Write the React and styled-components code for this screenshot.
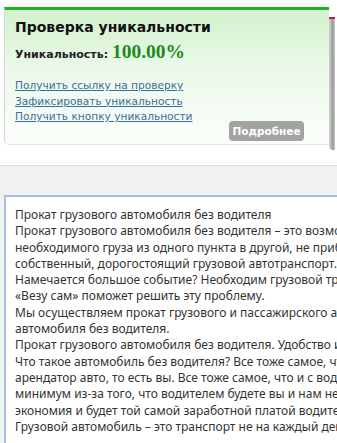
import React from 'react'
import styled, { createGlobalStyle } from 'styled-components'

const GlobalStyle = createGlobalStyle`
  html, body {
    margin: 0;
    padding: 0;
    background: #fff;
    overflow: hidden;
  }
  body {
    font-family: "DejaVu Sans", Verdana, sans-serif;
  }
`

const links = [
  'Получить ссылку на проверку',
  'Зафиксировать уникальность',
  'Получить кнопку уникальности',
]

const text = [
  'Прокат грузового автомобиля без водителя',
  'Прокат грузового автомобиля без водителя – это возможность перевезти',
  'необходимого груза из одного пункта в другой, не прибегая к услугам',
  'собственный, дорогостоящий грузовой автотранспорт. Э',
  'Намечается большое событие? Необходим грузовой транспорт?',
  '«Везу сам» поможет решить эту проблему.',
  'Мы осуществляем прокат грузового и пассажирского автотранспорта',
  'автомобиля без водителя.',
  'Прокат грузового автомобиля без водителя. Удобство и выгода',
  'Что такое автомобиль без водителя? Все тоже самое, что и',
  'арендатор авто, то есть вы. Все тоже самое, что и с водителем',
  'минимум из-за того, что водителем будете вы и нам не нужно',
  'экономия и будет той самой заработной платой водителя',
  'Грузовой автомобиль – это транспорт не на каждый день',
]

export default function App() {
  return (
    <Page>
      <GlobalStyle />
      <Top>
        <Panel>
          <Title>Проверка уникальности</Title>
          <Score>
            Уникальность: <Percent>100.00%</Percent>
          </Score>
          <Links>
            {links.map((l) => (
              <Link key={l} href="#">{l}</Link>
            ))}
          </Links>
          <More>Подробнее</More>
        </Panel>
        <SideEdge />
      </Top>
      <Lower>
        <Editor>
          {text.map((t, i) => (
            <Line key={i}>{t}</Line>
          ))}
        </Editor>
      </Lower>
    </Page>
  )
}

const Page = styled.div`
  width: 337px;
  height: 443px;
  overflow: hidden;
  display: flex;
  flex-direction: column;
`

const Top = styled.div`
  display: flex;
  align-items: flex-start;
  padding: 7px 0 0 4px;
  height: 166px;
  flex-shrink: 0;
  box-sizing: border-box;
  border-bottom: 1px solid #dedede;
`

const Panel = styled.div`
  position: relative;
  width: 325px;
  height: 138px;
  box-sizing: border-box;
  border-top: 3px solid #1fb21f;
  border-left: 1px solid #d8d8d8;
  border-bottom: 1px solid #e4e4e4;
  border-bottom-left-radius: 5px;
  background: linear-gradient(to bottom, #d2f1cd 0%, #ecf9ea 45%, #fbfefb 100%);
  padding: 9px 0 0 10px;
`

const Title = styled.div`
  font-size: 14px;
  font-weight: bold;
  color: #111;
  line-height: 17px;
`

const Score = styled.div`
  margin-top: 5px;
  font-size: 11px;
  font-weight: bold;
  color: #222;
  line-height: 22px;
`

const Percent = styled.span`
  font-family: "Liberation Serif", "DejaVu Serif", serif;
  font-size: 19.5px;
  font-weight: bold;
  color: #1c8a1c;
`

const Links = styled.div`
  margin-top: 12px;
  display: flex;
  flex-direction: column;
`

const Link = styled.a`
  font-size: 10.6px;
  line-height: 15.5px;
  color: #3a6e9a;
  text-decoration: underline;
`

const More = styled.div`
  position: absolute;
  left: 224px;
  top: 111px;
  width: 75px;
  height: 20px;
  border-radius: 4px;
  background: #a3a3a3;
  color: #fff;
  font-size: 10.5px;
  font-weight: bold;
  display: flex;
  align-items: center;
  justify-content: center;
`

const SideEdge = styled.div`
  margin-top: 10px;
  width: 6px;
  height: 131px;
  border-top: 2px solid #c0203a;
  border-bottom-left-radius: 4px;
  background: linear-gradient(to right, #d6d6d6, #9b9b9b 60%, #c4c4c4);
`

const Lower = styled.div`
  flex: 1;
  background: #f1f1f1;
  padding: 29px 0 0 4px;
`

const Editor = styled.div`
  width: 360px;
  height: 260px;
  box-sizing: border-box;
  border: 2px solid #a9bde9;
  background: #fff;
  padding: 10px 0 0 9px;
`

const Line = styled.div`
  font-family: "Noto Sans", "DejaVu Sans", sans-serif;
  font-size: 12px;
  line-height: 16.3px;
  color: #333;
  white-space: nowrap;
`
